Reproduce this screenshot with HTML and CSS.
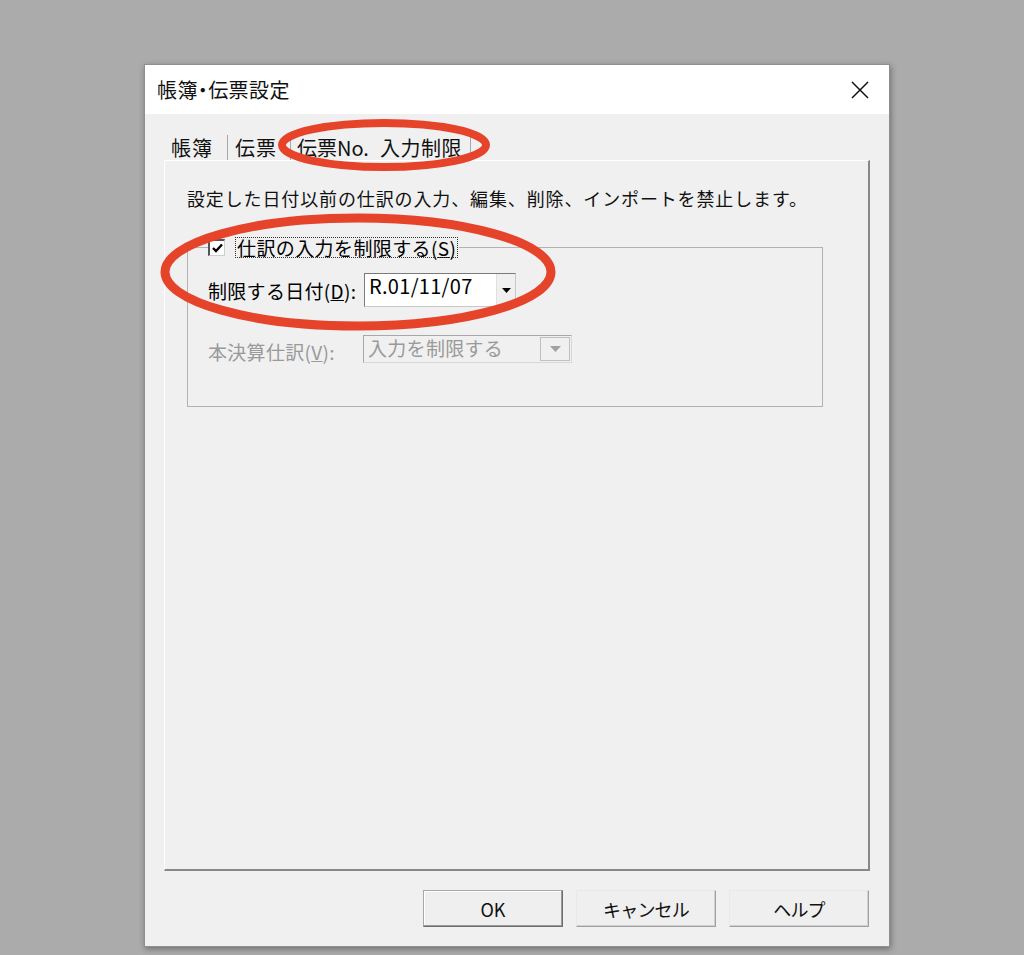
FILE: index.html
```html
<!DOCTYPE html>
<html lang="ja">
<head>
<meta charset="utf-8">
<title>帳簿・伝票設定</title>
<link rel="stylesheet" href="styles.css">
</head>
<body>
<div class="stage">
  <div class="dialog">
    <div class="titlebar">
      <span class="title">帳簿<span class="dot">・</span>伝票設定</span>
      <svg class="close" width="18" height="18" viewBox="0 0 18 18"><path d="M1 1 L17 17 M17 1 L1 17" stroke="#111" stroke-width="1.5" fill="none"/></svg>
    </div>
    <div class="content">
      <div class="tabs">
        <div class="tab tab-1">帳簿</div>
        <div class="tab tab-2">伝票</div>
        <div class="tab tab-3">伝票No.</div>
        <div class="tab tab-4 active">入力制限</div>
      </div>
      <div class="panel">
        <p class="desc">設定した日付以前の仕訳の入力、編集、削除、インポートを禁止します。</p>
        <fieldset class="group">
          <legend class="legend">
            <span class="checkbox">
              <svg width="11" height="10" viewBox="0 0 11 10"><path d="M1 5 L4 8 L10 1.5" stroke="#000" stroke-width="2.4" fill="none"/></svg>
            </span>
            <span class="focus">仕訳の入力を制限する(<u>S</u>)</span>
          </legend>
          <div class="row">
            <span class="label">制限する日付(<u>D</u>):</span>
            <div class="combo">
              <span class="combo-text">R.01/11/07</span>
              <span class="combo-btn"><svg width="9" height="5" viewBox="0 0 9 5"><path d="M0 0 H9 L4.5 5 Z" fill="#000"/></svg></span>
            </div>
          </div>
          <div class="row disabled">
            <span class="label">本決算仕訳(<u>V</u>):</span>
            <div class="combo combo-dis">
              <span class="combo-text">入力を制限する</span>
              <span class="combo-btn"><svg width="11" height="6" viewBox="0 0 11 6"><path d="M0 0 H11 L5.5 6 Z" fill="#a0a0a0"/></svg></span>
            </div>
          </div>
        </fieldset>
      </div>
      <div class="buttons">
        <button class="btn btn-default">OK</button>
        <button class="btn">キャンセル</button>
        <button class="btn">ヘルプ</button>
      </div>
    </div>
  </div>
  <svg class="annot" width="1024" height="955" viewBox="0 0 1024 955">
    <ellipse cx="384" cy="145" rx="102" ry="22" fill="none" stroke="#e6432b" stroke-width="8"/>
    <ellipse cx="358" cy="272" rx="193" ry="54" fill="none" stroke="#e6432b" stroke-width="9"/>
  </svg>
</div>
</body>
</html>
```

FILE: styles.css
```css
* { box-sizing: border-box; }
html, body { margin: 0; padding: 0; }
body {
  background: #ababab;
  font-family: "Noto Sans CJK JP", "Noto Sans", sans-serif;
  color: #000;
}
.stage {
  position: relative;
  width: 1024px;
  height: 955px;
  padding: 64px 0 0 144px;
}
.dialog {
  width: 746px;
  height: 883px;
  background: #f0f0f0;
  border: 1px solid #8f8f8f;
  box-shadow: 1px 2px 6px rgba(0,0,0,0.35);
  display: flex;
  flex-direction: column;
}
.titlebar {
  height: 49px;
  background: #fff;
  display: flex;
  align-items: center;
  justify-content: space-between;
  padding: 0 20px 0 12px;
}
.title {
  font-size: 20px;
  letter-spacing: 0.4px;
  color: #111;
}
.dot { font-feature-settings: "palt"; }
.close { display: block; }
.content {
  flex: 1;
  padding: 21px 19px 0 19px;
  display: flex;
  flex-direction: column;
}
.tabs {
  display: flex;
  height: 25px;
  padding-left: 1px;
}
.tab {
  font-size: 20px;
  line-height: 25px;
  letter-spacing: 1px;
  padding: 0 6px;
  border-right: 1px solid #a8a8a8;
  color: #111;
  white-space: nowrap;
}
.tab-1 { width: 63px; }
.tab-2 { width: 63px; padding-left: 7px; }
.tab-3 { width: 81px; border-right: none; letter-spacing: 0; }
.tab-4 { width: 99px; padding-left: 8px; letter-spacing: 0.5px; }
.panel {
  height: 711px;
  border-top: 1px solid #fff;
  border-left: 1px solid #fff;
  border-right: 2px solid #888;
  border-bottom: 2px solid #888;
  padding: 24px 0 0 22px;
}
.desc {
  margin: 0;
  font-size: 18px;
  line-height: 26px;
  letter-spacing: 0.87px;
  color: #111;
}
.group {
  margin: 27px 0 0 0;
  width: 636px;
  border: 1px solid #b2b2b2;
  padding: 16px 0 41px 20px;
  min-width: 0;
}
.legend {
  margin-left: 0;
  padding: 0 2px 0 0;
  display: flex;
  align-items: center;
  gap: 11px;
  font-size: 19px;
  line-height: 19px;
}
.checkbox {
  flex: none;
  width: 17px;
  height: 17px;
  min-width: 17px;
  background: #ffffff;
  border-style: solid;
  border-width: 2px 1px 1px 2px;
  border-color: #555 #cfcfcf #cfcfcf #555;
  display: flex;
  align-items: center;
  justify-content: center;
}
.checkbox svg { display: block; }
.focus {
  outline: 1px dotted #333;
  outline-offset: 0;
  padding: 0 1px;
  letter-spacing: 0.4px;
}
.row {
  display: flex;
  align-items: center;
  font-size: 19px;
}
.row + .row { margin-top: 26px; }
.label {
  width: 156px;
  flex: none;
  letter-spacing: 0.3px;
}
.combo {
  width: 152px;
  height: 34px;
  background: #fff;
  border: 1px solid #7a7a7a;
  border-right-color: #c8c8c8;
  border-bottom-color: #c8c8c8;
  display: flex;
  align-items: stretch;
}
.combo-text {
  flex: 1;
  padding: 1px 0 0 4px;
  font-size: 20px;
  line-height: 22px;
  letter-spacing: 0.3px;
}
.combo-btn {
  width: 19px;
  background: #f0f0f0;
  border-left: 1px solid #e0e0e0;
  display: flex;
  align-items: center;
  justify-content: center;
}
.disabled { color: #9a9a9a; }
.disabled .label { padding-top: 5px; }
.combo-dis {
  width: 209px;
  height: 28px;
  background: #f0f0f0;
  border-color: #a8a8a8 #d8d8d8 #d8d8d8 #a8a8a8;
  margin-left: -1px;
}
.combo-dis .combo-text {
  padding: 0 0 0 4px;
  font-size: 19px;
  line-height: 24px;
  color: #9a9a9a;
}
.combo-dis .combo-btn {
  width: 30px;
  border: 1px solid #c0c0c0;
  margin: 1px;
  background: #f0f0f0;
}
.buttons {
  display: flex;
  justify-content: flex-end;
  gap: 13px;
  margin-top: 19px;
  padding-right: 1px;
}
.btn {
  width: 140px;
  height: 37px;
  font-family: inherit;
  font-size: 18px;
  letter-spacing: -0.8px;
  color: #111;
  background: #efefef;
  border: 1px solid;
  border-color: #e8e8e8 #a0a0a0 #a0a0a0 #e8e8e8;
  box-shadow: inset -1px -1px 0 #d0d0d0;
  padding: 0;
}
.btn-default {
  letter-spacing: 0;
  border-color: #a8a8a8 #6e6e6e #6e6e6e #a8a8a8;
  box-shadow: inset -1px -1px 0 #9a9a9a, inset 1px 1px 0 #fff;
}
.annot {
  position: absolute;
  left: 0;
  top: 0;
  pointer-events: none;
}
```
